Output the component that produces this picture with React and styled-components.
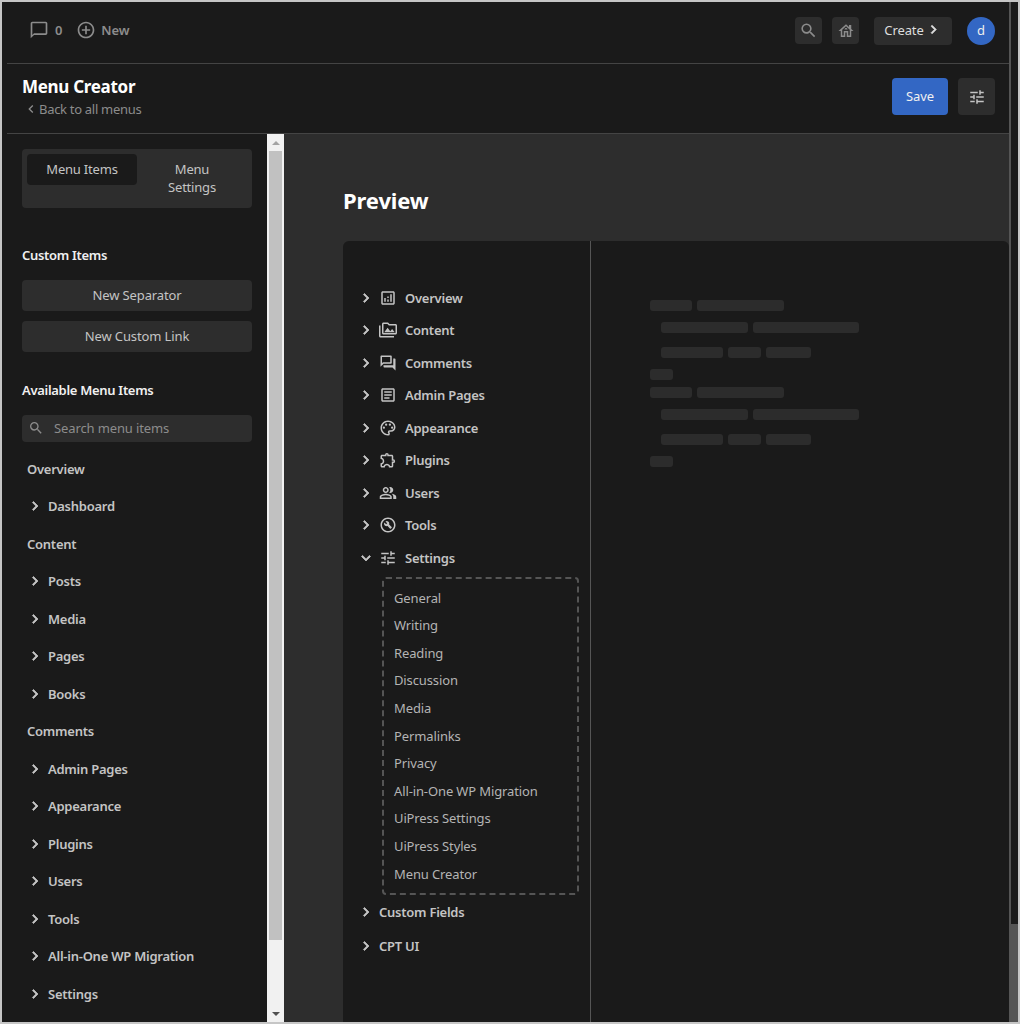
import React from "react";
import styled, { createGlobalStyle } from "styled-components";
import {
  MdOutlineChatBubbleOutline,
  MdAddCircleOutline,
  MdSearch,
  MdOutlineHouse,
  MdTune,
  MdChevronRight,
  MdChevronLeft,
  MdExpandMore,
  MdOutlineAnalytics,
  MdOutlinePermMedia,
  MdOutlineForum,
  MdOutlineArticle,
  MdOutlinePalette,
  MdOutlineExtension,
  MdOutlinePeopleAlt,
  MdOutlineBuildCircle,
} from "react-icons/md";

const GlobalStyle = createGlobalStyle`
  html, body {
    margin: 0;
    padding: 0;
    background: #1a1a1a;
    overflow: hidden;
  }
  * {
    box-sizing: border-box;
  }
  body {
    font-family: "Noto Sans", "Open Sans", sans-serif;
    font-size: 13px;
    letter-spacing: -0.12px;
  }
`;

const Frame = styled.div`
  width: 1020px;
  height: 1024px;
  display: flex;
  border: 2px solid #c6c6c6;
  background: #1a1a1a;
  overflow: hidden;
`;

const Main = styled.div`
  width: 1007px;
  display: flex;
  flex-direction: column;
  padding-left: 5px;
`;

const PageScroll = styled.div`
  width: 9px;
  background: #555555;
  padding-left: 2px;
`;

const PageThumb = styled.div`
  height: 922px;
  background: #1c1c1c;
`;

const TopBar = styled.div`
  height: 62px;
  flex-shrink: 0;
  display: flex;
  align-items: center;
  justify-content: space-between;
  padding: 0 14px 4px 22px;
  border-bottom: 1px solid #444444;
`;

const Group = styled.div`
  display: flex;
  align-items: center;
  padding-bottom: ${(p) => p.$lift || 0}px;
`;

const MutedLabel = styled.span`
  color: #8c8c8c;
  font-weight: 600;
  font-size: 13px;
  margin-left: ${(p) => p.$gap || 0}px;
  margin-right: ${(p) => p.$after || 0}px;
`;

const SquareBtn = styled.div`
  width: ${(p) => p.$size || 27}px;
  height: ${(p) => p.$size || 27}px;
  display: flex;
  align-items: center;
  justify-content: center;
  background: #2d2d2d;
  border-radius: 4px;
  color: ${(p) => p.$color || "#8c8c8c"};
  margin-right: ${(p) => p.$after || 0}px;
`;

// thicker than the stock glyph, the bounding path of the icon is left alone
const Chevron = styled(MdChevronRight)`
  flex-shrink: 0;
  path:not([fill="none"]) {
    stroke: currentColor;
    stroke-width: 1px;
  }
`;

const ChevronDown = styled(MdExpandMore)`
  flex-shrink: 0;
  path:not([fill="none"]) {
    stroke: currentColor;
    stroke-width: 1px;
  }
`;

const CreateBtn = styled.div`
  width: 78px;
  height: 28px;
  display: flex;
  align-items: center;
  justify-content: center;
  gap: 1px;
  background: #2d2d2d;
  border-radius: 4px;
  color: #dddddd;
  font-size: 13px;
  padding-bottom: 2px;
  margin-right: 15px;
`;

const Avatar = styled.div`
  width: 28px;
  height: 28px;
  border-radius: 50%;
  background: #3367c4;
  color: #eeeeee;
  display: flex;
  align-items: center;
  justify-content: center;
  font-size: 13px;
  padding-bottom: 2px;
`;

const TitleBar = styled.div`
  height: 70px;
  flex-shrink: 0;
  display: flex;
  align-items: center;
  justify-content: space-between;
  padding: 0 14px 4px 15px;
  border-bottom: 1px solid #444444;
`;

const Title = styled.div`
  color: #ffffff;
  font-size: 17px;
  font-weight: 700;
  letter-spacing: -0.3px;
  line-height: 24px;
`;

const BackLink = styled.div`
  display: flex;
  align-items: center;
  color: #8c8c8c;
  font-size: 13px;
  line-height: 18px;
  margin-top: 1px;
  letter-spacing: -0.3px;
  padding-left: 1px;
`;

const SaveBtn = styled.div`
  width: 56px;
  height: 37px;
  display: flex;
  align-items: center;
  justify-content: center;
  background: #3367c4;
  border-radius: 4px;
  color: #f0f0f0;
  font-size: 13px;
  padding-bottom: 1px;
  margin-right: 10px;
`;

const Body = styled.div`
  flex: 1;
  display: flex;
  min-height: 0;
`;

const Sidebar = styled.div`
  width: 260px;
  flex-shrink: 0;
  padding: 15px 15px 0;
  overflow: hidden;
`;

const SideScroll = styled.div`
  width: 17px;
  flex-shrink: 0;
  background: #f1f1f1;
  display: flex;
  flex-direction: column;
  align-items: center;
`;

const ScrollArrow = styled.div`
  height: 17px;
  width: 100%;
  flex-shrink: 0;
  display: flex;
  align-items: center;
  justify-content: center;
  &::before {
    content: "";
    border-left: 4px solid transparent;
    border-right: 4px solid transparent;
    ${(p) => (p.$down ? "border-top: 4px solid #505050;" : "border-bottom: 4px solid #a3a3a3;")}
  }
`;

const ScrollThumb = styled.div`
  width: 13px;
  height: 789px;
  background: #c1c1c1;
`;

const ScrollSpacer = styled.div`
  flex: 1;
`;

const Tabs = styled.div`
  height: 59px;
  display: flex;
  align-items: flex-start;
  padding: 5px;
  background: #2d2d2d;
  border-radius: 4px;
`;

const Tab = styled.div`
  flex: 1;
  min-height: 31px;
  padding: 6px 16px;
  text-align: center;
  color: #c4c4c4;
  font-size: 13px;
  letter-spacing: -0.2px;
  line-height: 18px;
  border-radius: 4px;
  background: ${(p) => (p.$active ? "#1a1a1a" : "transparent")};
`;

const SectionHead = styled.div`
  color: #f0f0f0;
  font-size: 13px;
  font-weight: 600;
  letter-spacing: -0.3px;
  line-height: 18px;
  margin-top: ${(p) => p.$top}px;
  margin-bottom: ${(p) => p.$bottom}px;
`;

const WideBtn = styled.div`
  height: 31px;
  display: flex;
  align-items: center;
  justify-content: center;
  background: #2d2d2d;
  border-radius: 4px;
  color: #c4c4c4;
  font-size: 13px;
  padding-bottom: 2px;
  margin-bottom: 10px;
`;

const SearchBox = styled.div`
  height: 27px;
  display: flex;
  align-items: center;
  gap: 10px;
  padding-left: 6px;
  background: #2d2d2d;
  border-radius: 4px;
  color: #8c8c8c;
  font-size: 13px;
  padding-bottom: 2px;
  margin-bottom: 8px;
`;

const GroupLabel = styled.div`
  height: 37.5px;
  display: flex;
  align-items: center;
  padding-left: 5px;
  color: #c4c4c4;
  font-size: 13px;
  font-weight: 600;
  letter-spacing: -0.25px;
`;

const ItemRow = styled(GroupLabel)`
  padding-left: 4px;
  gap: 4px;
`;

const Preview = styled.div`
  flex: 1;
  background: #2d2d2d;
  padding: 0 0 0 59px;
  display: flex;
  flex-direction: column;
  min-width: 0;
`;

const PreviewHead = styled.div`
  color: #ffffff;
  font-size: 22px;
  font-weight: 700;
  line-height: 32px;
  padding-top: 50px;
  height: 107px;
  flex-shrink: 0;
`;

const Panel = styled.div`
  flex: 1;
  display: flex;
  background: #1a1a1a;
  border-radius: 6px 6px 0 0;
  min-height: 0;
`;

const PanelMenu = styled.div`
  width: 248px;
  flex-shrink: 0;
  padding: 40.6px 11px 0 14px;
  border-right: 1px solid #555555;
`;

const MenuRow = styled.div`
  height: 32.5px;
  display: flex;
  align-items: center;
  color: #c4c4c4;
  font-size: 13px;
  font-weight: 600;
  letter-spacing: -0.25px;
`;

const MenuIcon = styled.span`
  width: 18px;
  height: 18px;
  display: flex;
  align-items: center;
  justify-content: center;
  margin: 0 8px 0 4px;
  color: #c4c4c4;
`;

const SubMenu = styled.div`
  margin: 2.7px 0 0 25px;
  height: 318px;
  padding: 5px 10px;
  border: 2px dashed #555555;
  border-radius: 4px;
`;

const SubItem = styled.div`
  height: 27.6px;
  display: flex;
  align-items: center;
  color: #b4b4b4;
  font-size: 13px;
`;

const PlainRow = styled(MenuRow)`
  height: 34px;
  gap: 4px;
`;

const Canvas = styled.div`
  flex: 1;
  padding: 59px 0 0 59px;
`;

const SkelRow = styled.div`
  display: flex;
  gap: 5px;
  height: 11px;
  padding-left: ${(p) => p.$indent || 0}px;
  margin-bottom: ${(p) => p.$after}px;
`;

const Bar = styled.div`
  width: ${(p) => p.$w}px;
  height: 11px;
  background: #2c2c2c;
  border-radius: 3px;
`;

const sideItems = [
  { label: "Overview" },
  { item: "Dashboard" },
  { label: "Content" },
  { item: "Posts" },
  { item: "Media" },
  { item: "Pages" },
  { item: "Books" },
  { label: "Comments" },
  { item: "Admin Pages" },
  { item: "Appearance" },
  { item: "Plugins" },
  { item: "Users" },
  { item: "Tools" },
  { item: "All-in-One WP Migration" },
  { item: "Settings" },
];

const menuItems = [
  ["Overview", MdOutlineAnalytics],
  ["Content", MdOutlinePermMedia],
  ["Comments", MdOutlineForum],
  ["Admin Pages", MdOutlineArticle],
  ["Appearance", MdOutlinePalette],
  ["Plugins", MdOutlineExtension],
  ["Users", MdOutlinePeopleAlt],
  ["Tools", MdOutlineBuildCircle],
];

const subItems = [
  "General",
  "Writing",
  "Reading",
  "Discussion",
  "Media",
  "Permalinks",
  "Privacy",
  "All-in-One WP Migration",
  "UiPress Settings",
  "UiPress Styles",
  "Menu Creator",
];

function Skeleton() {
  return (
    <>
      <SkelRow $after={11}>
        <Bar $w={42} />
        <Bar $w={87} />
      </SkelRow>
      <SkelRow $indent={11} $after={14}>
        <Bar $w={87} />
        <Bar $w={106} />
      </SkelRow>
      <SkelRow $indent={11} $after={11}>
        <Bar $w={62} />
        <Bar $w={33} />
        <Bar $w={45} />
      </SkelRow>
      <SkelRow $after={7}>
        <Bar $w={23} />
      </SkelRow>
    </>
  );
}

export default function App() {
  return (
    <>
      <GlobalStyle />
      <Frame>
        <Main>
          <TopBar>
            <Group $lift={2}>
              <MdOutlineChatBubbleOutline size={20} color="#8c8c8c" />
              <MutedLabel $gap={6} $after={14}>0</MutedLabel>
              <MdAddCircleOutline size={20} color="#8c8c8c" />
              <MutedLabel $gap={5}>New</MutedLabel>
            </Group>
            <Group>
              <SquareBtn $after={10}><MdSearch size={19} /></SquareBtn>
              <SquareBtn $after={15}><MdOutlineHouse size={18} /></SquareBtn>
              <CreateBtn>Create<Chevron size={17} /></CreateBtn>
              <Avatar>d</Avatar>
            </Group>
          </TopBar>
          <TitleBar>
            <div>
              <Title>Menu Creator</Title>
              <BackLink><MdChevronLeft size={16} />Back to all menus</BackLink>
            </div>
            <Group>
              <SaveBtn>Save</SaveBtn>
              <SquareBtn $size={37} $color="#c4c4c4"><MdTune size={18} /></SquareBtn>
            </Group>
          </TitleBar>
          <Body>
            <Sidebar>
              <Tabs>
                <Tab $active>Menu Items</Tab>
                <Tab>Menu Settings</Tab>
              </Tabs>
              <SectionHead $top={38} $bottom={16}>Custom Items</SectionHead>
              <WideBtn>New Separator</WideBtn>
              <WideBtn>New Custom Link</WideBtn>
              <SectionHead $top={29} $bottom={16}>Available Menu Items</SectionHead>
              <SearchBox><MdSearch size={16} />Search menu items</SearchBox>
              {sideItems.map((s) =>
                s.label ? (
                  <GroupLabel key={s.label}>{s.label}</GroupLabel>
                ) : (
                  <ItemRow key={s.item}>
                    <Chevron size={18} />
                    {s.item}
                  </ItemRow>
                )
              )}
            </Sidebar>
            <SideScroll>
              <ScrollArrow />
              <ScrollThumb />
              <ScrollSpacer />
              <ScrollArrow $down />
            </SideScroll>
            <Preview>
              <PreviewHead>Preview</PreviewHead>
              <Panel>
                <PanelMenu>
                  {menuItems.map(([name, Icon]) => (
                    <MenuRow key={name}>
                      <Chevron size={18} />
                      <MenuIcon><Icon size={18} /></MenuIcon>
                      {name}
                    </MenuRow>
                  ))}
                  <MenuRow>
                    <ChevronDown size={18} />
                    <MenuIcon><MdTune size={18} /></MenuIcon>
                    Settings
                  </MenuRow>
                  <SubMenu>
                    {subItems.map((name) => (
                      <SubItem key={name}>{name}</SubItem>
                    ))}
                  </SubMenu>
                  <PlainRow><Chevron size={18} />Custom Fields</PlainRow>
                  <PlainRow><Chevron size={18} />CPT UI</PlainRow>
                </PanelMenu>
                <Canvas>
                  <Skeleton />
                  <Skeleton />
                </Canvas>
              </Panel>
            </Preview>
          </Body>
        </Main>
        <PageScroll>
          <PageThumb />
        </PageScroll>
      </Frame>
    </>
  );
}
